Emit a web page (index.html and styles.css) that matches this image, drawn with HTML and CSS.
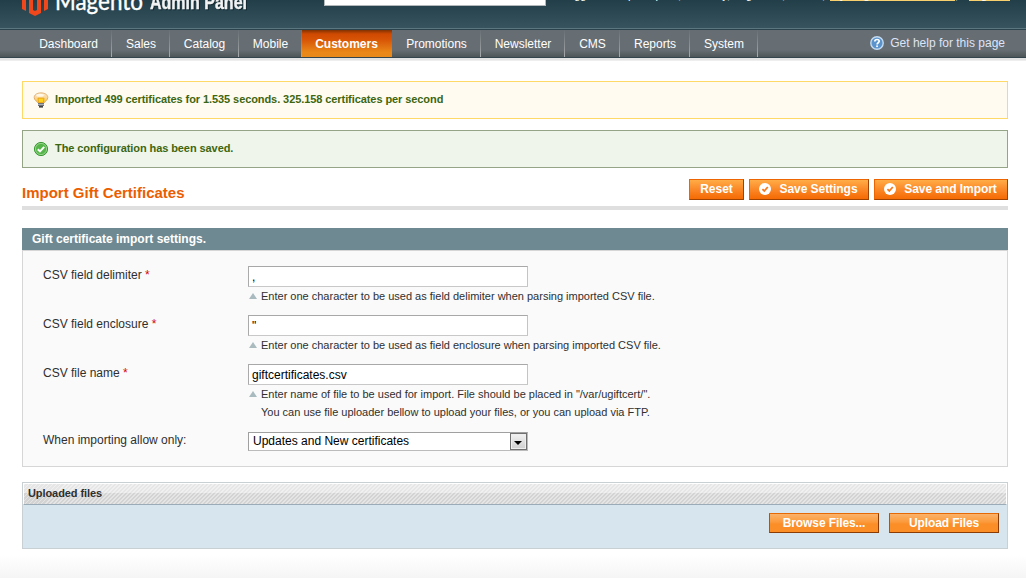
FILE: index.html
```
<!DOCTYPE html>
<html lang="en">
<head>
    <meta charset="UTF-8">
    <title>Import Gift Certificates / Magento Admin</title>
    <link rel="stylesheet" href="styles.css">
</head>
<body>
    <div class="header">
        <svg class="logo" width="240" height="20" viewBox="0 0 240 20">
            <path d="M0 -6L13 -13L26 -6V9L22 11V-4L13 -9L4 -4V11L0 9Z" fill="#f1471d"/>
            <path d="M7 -4L11 -6V10L13 11L15 10V-6L19 -4V13L13 16L7 13Z" fill="#f1471d"/>
            <text class="logo-name" x="33" y="9.5" textLength="88" lengthAdjust="spacingAndGlyphs">Magento</text>
            <text class="logo-panel" x="128" y="9" textLength="97" lengthAdjust="spacingAndGlyphs">Admin Panel</text>
        </svg>
        <input class="search" type="text">
        <div class="account">
            <span class="user">Logged in as perceptor</span><span class="bar">|</span><span class="date">Tuesday, August 16, 2011</span><span class="bar">|</span><a class="try" href="#">Try Magento Go for Free</a><span class="bar">|</span><a class="logout" href="#">Log Out</a>
        </div>
    </div>

    <div class="nav">
        <ul class="menu">
            <li>Dashboard</li>
            <li>Sales</li>
            <li>Catalog</li>
            <li>Mobile</li>
            <li class="active">Customers</li>
            <li>Promotions</li>
            <li>Newsletter</li>
            <li>CMS</li>
            <li>Reports</li>
            <li>System</li>
        </ul>
        <a class="help" href="#">
            <svg width="14" height="14" viewBox="0 0 14 14">
                <circle cx="7" cy="7" r="6.2" fill="#5b93cd" stroke="#c3dbf2" stroke-width="1.4"/>
                <path d="M4.8 5.4C4.8 2.8 9.3 2.9 9.2 5.3C9.1 6.8 7.1 6.7 7.1 8.5" fill="none" stroke="#fff" stroke-width="1.7"/>
                <rect x="6.2" y="9.4" width="1.7" height="1.7" fill="#fff"/>
            </svg>
            <span>Get help for this page</span>
        </a>
    </div>

    <div class="content">
        <div class="message notice">
            <svg width="16" height="16" viewBox="0 0 16 16">
                <defs>
                    <linearGradient id="glass" x1="0" y1="0" x2="0" y2="1">
                        <stop offset="0" stop-color="#fdebc8"/>
                        <stop offset="0.45" stop-color="#fad79a"/>
                        <stop offset="1" stop-color="#f9c534"/>
                    </linearGradient>
                </defs>
                <path d="M5 11C4.6 9.4 1.2 8.6 1.2 5.5C1.2 2.6 4.3 .9 8 .9S14.8 2.6 14.8 5.5C14.8 8.6 11.4 9.4 11 11Z" fill="url(#glass)" stroke="#dda766" stroke-width=".9"/>
                <ellipse cx="7" cy="3.3" rx="3.8" ry="1.5" fill="#fff" opacity=".7"/>
                <path d="M5 6.2H11L10.4 10.6H5.6Z" fill="#ffd21f" stroke="#e9a414" stroke-width=".9"/>
                <rect x="5" y="11" width="6" height="3" fill="#6c6e72"/>
                <path d="M5 12.4H11" stroke="#c7c8cb" stroke-width=".8"/>
                <rect x="6" y="14" width="4" height="1.6" fill="#3f4145"/>
            </svg>
            <span>Imported 499 certificates for 1.535 seconds. 325.158 certificates per second</span>
        </div>
        <div class="message success">
            <svg width="16" height="16" viewBox="0 0 16 16">
                <circle cx="8" cy="8" r="6.6" fill="#55b548" stroke="#3c9737"/>
                <circle cx="8" cy="8" r="5.6" fill="none" stroke="#a5dc9b" stroke-width=".8"/>
                <path d="M4.8 8.2L7 10.4L11.2 5.9" fill="none" stroke="#fff" stroke-width="2"/>
            </svg>
            <span>The configuration has been saved.</span>
        </div>

        <div class="content-header">
            <h3>Import Gift Certificates</h3>
            <div class="buttons">
                <button class="btn reset">Reset</button>
                <button class="btn save">
                    <svg width="12" height="12" viewBox="0 0 12 12"><circle cx="6" cy="6" r="6" fill="#fff"/><path d="M3.4 6.2L5.3 8L8.8 4" fill="none" stroke="#f47a20" stroke-width="1.8"/></svg>
                    <span>Save Settings</span>
                </button>
                <button class="btn import">
                    <svg width="12" height="12" viewBox="0 0 12 12"><circle cx="6" cy="6" r="6" fill="#fff"/><path d="M3.4 6.2L5.3 8L8.8 4" fill="none" stroke="#f47a20" stroke-width="1.8"/></svg>
                    <span>Save and Import</span>
                </button>
            </div>
        </div>

        <div class="entry-head">Gift certificate import settings.</div>
        <div class="fieldset">
            <div class="row">
                <label>CSV field delimiter <em>*</em></label>
                <div class="value">
                    <input type="text" value=",">
                    <p class="note">Enter one character to be used as field delimiter when parsing imported CSV file.</p>
                </div>
            </div>
            <div class="row">
                <label>CSV field enclosure <em>*</em></label>
                <div class="value">
                    <input type="text" value="&quot;">
                    <p class="note">Enter one character to be used as field enclosure when parsing imported CSV file.</p>
                </div>
            </div>
            <div class="row file-row">
                <label>CSV file name <em>*</em></label>
                <div class="value">
                    <input type="text" value="giftcertificates.csv">
                    <p class="note">Enter name of file to be used for import. File should be placed in "/var/ugiftcert/".<br>You can use file uploader bellow to upload your files, or you can upload via FTP.</p>
                </div>
            </div>
            <div class="row select-row">
                <label>When importing allow only:</label>
                <div class="select">
                    <span>Updates and New certificates</span>
                    <i class="arrow"></i>
                </div>
            </div>
        </div>

        <div class="uploader">
            <div class="uploader-head">Uploaded files</div>
            <div class="uploader-body">
                <button class="btn-upload">Browse Files...</button>
                <button class="btn-upload">Upload Files</button>
            </div>
        </div>
    </div>
    <div class="footer"></div>
</body>
</html>
```
FILE: styles.css
```
* {
    box-sizing: border-box;
    margin: 0;
    padding: 0;
}

body {
    height: 578px;
    overflow: hidden;
    display: flex;
    flex-direction: column;
    background: #fff;
    color: #2f2f2f;
    font: 12px/16px "Liberation Sans", Arial, sans-serif;
}

/* header */
.header {
    height: 30px;
    flex: none;
    display: flex;
    align-items: flex-start;
    overflow: hidden;
    padding-left: 22px;
    background: linear-gradient(#223f49, #38555f);
    border-bottom: 1px solid #2b434c;
    box-shadow: inset 0 -1px #5b767e;
}

.logo {
    flex: none;
    overflow: hidden;
}

.logo-name {
    font: 25px Lato, sans-serif;
    fill: #fff;
    stroke: #fff;
    stroke-width: 0.4px;
}

.logo-panel {
    font: bold 20px "Liberation Sans Narrow", "Liberation Sans", sans-serif;
    fill: #f2f2f2;
    stroke: #f2f2f2;
    stroke-width: 0.4px;
    filter: drop-shadow(1px 1px 0 #142a32);
}

.search {
    width: 222px;
    height: 22px;
    margin: -16px 0 0 62px;
    border: 1px solid #b3b9bb;
    background: #fff;
}

.account {
    display: flex;
    margin: -13px 0 0 16px;
    font-size: 11px;
    line-height: 16px;
    color: #fff;
    white-space: nowrap;
}

.account .user {
    width: 116px;
}

.account .date {
    width: 136px;
}

.account .bar {
    width: 8px;
    color: #8ca0a6;
}

.account a {
    height: 14px;
    color: #fff;
    text-decoration: none;
    border-bottom: 1px solid #f8cf6d;
}

.account .try {
    width: 125px;
}

.account .logout {
    width: 41px;
    margin-left: 6px;
}

/* navigation */
.nav {
    height: 31px;
    flex: none;
    display: flex;
    justify-content: space-between;
    padding: 0 21px 0 25px;
    background: linear-gradient(#666e73 0, #666e73 20px, #4f5659 27px, #34454d 27px, #34454d 28px, #efefef 28px, #d9d9d9 29px, #eee 30px, #eee 31px);
}

.menu {
    height: 27px;
    display: grid;
    grid-template-columns: 87px 58px 69px 63px 90px 89px 84px 55px 70px 68px;
    grid-template-rows: 27px;
    list-style: none;
    color: #fff;
    line-height: 28px;
    text-align: center;
}

.menu li {
    padding-left: 1px;
    border-right: 1px solid;
    border-image: linear-gradient(#666e73, #a9adaf) 1;
}

.menu .active {
    padding: 0 1px 0 0;
    border: 0;
    background: linear-gradient(#803202 0, #d04a02 4px, #d65205 9px, #ea8718 22px, #e98a1a);
    font-weight: bold;
}

.help {
    display: flex;
    align-items: center;
    gap: 6px;
    height: 26px;
    color: #dfe4f7;
    text-decoration: none;
}

/* messages */
.content {
    flex: none;
    padding: 20px 18px 0 22px;
}

.message {
    display: flex;
    gap: 6px;
    height: 38px;
    padding: 10px 0 0 10px;
    margin-bottom: 11px;
    border: 1px solid;
    color: #3d6611;
    font-size: 11px;
    line-height: 15px;
    font-weight: bold;
    letter-spacing: -0.08px;
}

.notice {
    background: #fffbf0;
    border-color: #ffd967;
}

.success {
    background: #eff5ea;
    border-color: #95a486;
}

/* page title */
.content-header {
    display: flex;
    justify-content: space-between;
    height: 31px;
    margin-bottom: 18px;
    border-bottom: 4px solid #dfdfdf;
}

.content-header h3 {
    padding-top: 5px;
    color: #eb5e00;
    font-size: 15px;
    line-height: 18px;
}

.buttons {
    display: flex;
    gap: 5px;
}

.btn {
    display: flex;
    align-items: center;
    justify-content: center;
    height: 21px;
    border: 1px solid;
    border-color: #ed6502 #a04300 #a04300 #ed6502;
    background: linear-gradient(#ffac47, #fb8827 50%, #f56a03);
    color: #fff;
    font: bold 12px "Liberation Sans", Arial, sans-serif;
}

.btn svg {
    margin-bottom: 1px;
}

.btn span {
    margin: 0 1px 2px 8px;
    letter-spacing: -0.05px;
}

.reset {
    width: 55px;
    padding-bottom: 2px;
}

.save {
    width: 120px;
}

.import {
    width: 134px;
}

/* settings form */
.entry-head {
    height: 22px;
    padding-left: 10px;
    background: #6f8992;
    color: #fff;
    font-weight: bold;
    line-height: 22px;
}

.fieldset {
    height: 217px;
    padding: 15px 20px 0;
    border: 1px solid #d6d6d6;
    background: #fafafa;
}

.row {
    display: grid;
    grid-template-columns: 205px 1fr;
    height: 49px;
}

.row label {
    padding-top: 1px;
}

.select-row label {
    padding-top: 0;
}

.row em {
    color: #d40707;
    font-style: normal;
}

.file-row {
    height: 68px;
}

.value input {
    display: block;
    width: 280px;
    height: 21px;
    padding: 1px 3px 0;
    border: 1px solid;
    border-color: #a8a8a8 #c4c4c4 #c8c8c8 #aaa;
    background: #fff;
    color: #000;
    font: 12px "Liberation Sans", Arial, sans-serif;
}

.note {
    position: relative;
    padding-left: 13px;
    font-size: 11px;
    line-height: 18px;
}

.note::before {
    content: "";
    position: absolute;
    left: 1px;
    top: 6px;
    border: 4px solid transparent;
    border-top: 0;
    border-bottom: 6px solid #a9bbbf;
}

.select {
    display: flex;
    justify-content: space-between;
    width: 280px;
    height: 19px;
    padding-left: 4px;
    border: 1px solid;
    border-color: #a0a0a0 #bbb #bbb #a0a0a0;
    background: #fff;
    color: #000;
}

.arrow {
    display: flex;
    align-items: center;
    justify-content: center;
    width: 17px;
    height: 17px;
    border: 1px solid #707070;
    background: linear-gradient(#f2f2f2, #cfcfcf);
    box-shadow: inset 0 0 0 1px #eee;
}

.arrow::before {
    content: "";
    margin: 3px 1px 0 0;
    border: 4px solid transparent;
    border-bottom: 0;
    border-top-color: #000;
}

/* uploader */
.uploader {
    height: 67px;
    margin-top: 15px;
    border: 1px solid #c8d0d3;
    background: #d7e5ef;
}

.uploader-head {
    height: 22px;
    padding-left: 4px;
    border: 1px solid #fff;
    border-bottom-color: #9babb8;
    background:
        repeating-linear-gradient(135deg, rgba(255,255,255,0.4) 0, rgba(255,255,255,0.4) 1.4px, transparent 1.4px, transparent 2.83px),
        linear-gradient(#e6e6e6 0, #e6e6e6 9px, #d3d3d3 9px);
    font-size: 11px;
    line-height: 19px;
    font-weight: bold;
    letter-spacing: -0.08px;
}

.uploader-body {
    display: flex;
    justify-content: flex-end;
    gap: 10px;
    padding: 8px 8px 0;
}

.btn-upload {
    width: 110px;
    height: 20px;
    border: 1px solid;
    border-color: #e56a05 #8a3c04 #8a3c04 #b75308;
    background: linear-gradient(#fbb369 0, #fb9a3c 8px, #fb8e27 10px, #fb8e27);
    color: #fff;
    font: bold 12px "Liberation Sans", Arial, sans-serif;
    letter-spacing: -0.1px;
}

.footer {
    flex: 1;
    margin-top: 6px;
    background: linear-gradient(#fff, #f5f5f5);
}
```
